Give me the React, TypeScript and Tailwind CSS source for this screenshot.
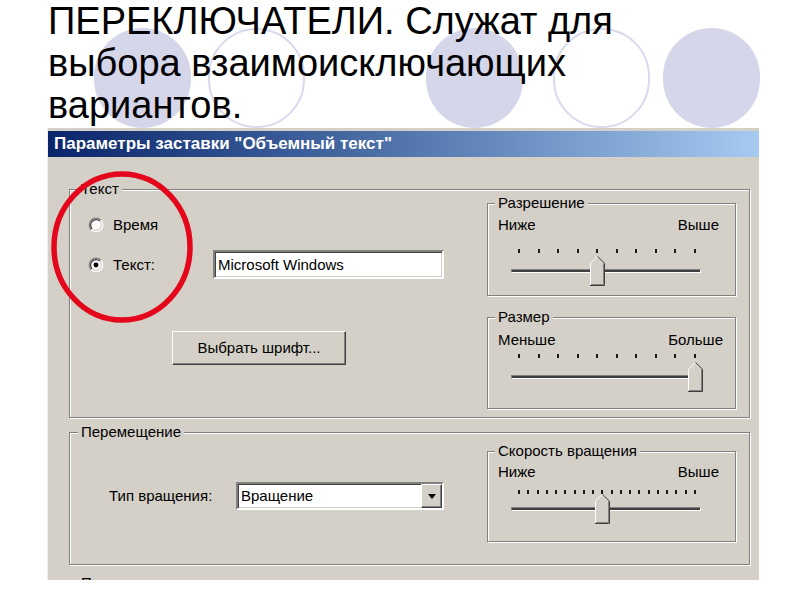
import type { ReactNode } from 'react';

const etched = 'border border-[#808080] shadow-[inset_1px_1px_0_#ffffff,1px_1px_0_#ffffff]';
const sunken =
  'border-2 border-t-[#808080] border-l-[#808080] border-b-white border-r-white shadow-[inset_1px_1px_0_#404040,inset_-1px_-1px_0_#d4d0c8]';
const raised =
  'border border-t-white border-l-white border-b-[#404040] border-r-[#404040] shadow-[inset_-1px_-1px_0_#808080]';

function Group({ label, left, className, children }: { label: string; left: string; className: string; children?: ReactNode }) {
  return (
    <div className={`relative ${etched} ${className}`}>
      <span className={`absolute -top-[10px] ${left} bg-[#d4d0c8] px-[3px] leading-[18px]`}>{label}</span>
      {children}
    </div>
  );
}

function Radio({ checked }: { checked?: boolean }) {
  return (
    <svg width="16" height="16" viewBox="0 0 13 13" className="shrink-0">
      <circle cx="6.5" cy="6.5" r="5" fill="#ffffff" />
      <path d="M2.61 10.39 A5.5 5.5 0 0 1 10.39 2.61" fill="none" stroke="#808080" />
      <path d="M10.39 2.61 A5.5 5.5 0 0 1 2.61 10.39" fill="none" stroke="#ffffff" />
      <path d="M3.32 9.68 A4.5 4.5 0 0 1 9.68 3.32" fill="none" stroke="#404040" />
      <path d="M9.68 3.32 A4.5 4.5 0 0 1 3.32 9.68" fill="none" stroke="#d4d0c8" />
      {checked && <circle cx="6.5" cy="6.5" r="2" fill="#000000" />}
    </svg>
  );
}

function Thumb({ left }: { left: number }) {
  return (
    <svg width="15" height="30" viewBox="0 0 15 30" className="absolute -top-[13px]" style={{ left }}>
      <path d="M0 7 L7 0 L8 0 L15 7 V30 H0 Z" fill="#d4d0c8" />
      <polyline points="0.5,29 0.5,7.2 7.3,0.5" fill="none" stroke="#ffffff" />
      <polyline points="13.5,7.5 13.5,28.5 1,28.5" fill="none" stroke="#808080" />
      <polyline points="7.6,0.5 14.5,7.2 14.5,29.5 0,29.5" fill="none" stroke="#404040" />
    </svg>
  );
}

interface SliderProps {
  title: string;
  low: string;
  high: string;
  ticks: number;
  value: number;
  box: string;
  pad: string;
  tickGap: string;
  trackGap: string;
}

function Slider({ title, low, high, ticks, value, box, pad, tickGap, trackGap }: SliderProps) {
  const step = 176 / (ticks - 1);
  return (
    <Group label={title} left="left-[7px]" className={`w-[249px] ${box}`}>
      <div className={`flex justify-between pl-[10px] leading-[18px] ${pad}`}>
        <span>{low}</span>
        <span>{high}</span>
      </div>
      <div className={`ml-[30px] w-[178px] h-[4px] flex justify-between ${tickGap}`}>
        {Array.from({ length: ticks }).map((_, i) => (
          <span key={i} className="w-[2px] h-[4px] bg-[#1a1a1a]" />
        ))}
      </div>
      <div className={`relative ml-[23px] w-[190px] ${trackGap}`}>
        <div className="h-[4px] border border-t-[#808080] border-l-[#808080] border-b-white border-r-white bg-[#404040]" />
        <Thumb left={8 + value * step - 7.5} />
      </div>
    </Group>
  );
}

const circles = [
  { x: 94, filled: true },
  { x: 208, filled: false },
  { x: 426, filled: true },
  { x: 553, filled: false },
  { x: 663, filled: true },
];

export default function App() {
  return (
    <div className="relative w-[800px] h-[600px] bg-white overflow-hidden font-['Liberation_Sans',Arial,sans-serif] text-black">
      {/* decorative circles of the slide */}
      {circles.map((c) => (
        <div
          key={c.x}
          className={`absolute top-[28px] w-[97px] h-[100px] rounded-full ${c.filled ? 'bg-[#d6d6eb]' : 'border-2 border-[#d9d9ed] bg-white'}`}
          style={{ left: c.x }}
        />
      ))}

      <div className="relative flex flex-col">
        <h1 className="h-[128px] pl-[48px] text-[38px] leading-[42px] font-normal">
          ПЕРЕКЛЮЧАТЕЛИ. Служат для
          <br />
          выбора взаимоисключающих
          <br />
          вариантов.
        </h1>

        <div className="ml-[47px] w-[712px] h-[452px] overflow-hidden bg-[#d4d0c8] border-l border-l-[#ececec] pt-[3px] text-[15px] leading-[18px]">
          <div className="h-[26px] flex items-center pl-[6px] bg-gradient-to-r from-[#0a246a] to-[#a6caf0] text-white font-bold text-[17px]">
            Параметры заставки "Объемный текст"
          </div>

          <div className="pl-[21px] pt-[32px] flex flex-col">
            <Group label="Текст" left="left-[8px]" className="w-[681px] h-[229px] flex">
              <div className="flex-1 flex flex-col items-start pl-[18px] pt-[25px]">
                <div className="h-[20px] flex items-center gap-[9px]">
                  <Radio />
                  <span>Время</span>
                </div>
                <div className="mt-[15px] h-[29px] flex items-center">
                  <Radio checked />
                  <span className="ml-[9px] w-[100px]">Текст:</span>
                  <div className={`w-[231px] h-[29px] bg-white flex items-center pl-[3px] ${sunken}`}>Microsoft Windows</div>
                </div>
                <button className={`mt-[52px] ml-[84px] w-[174px] h-[34px] bg-[#d4d0c8] flex items-center justify-center ${raised}`}>
                  Выбрать шрифт...
                </button>
              </div>
              <div className="flex flex-col pt-[13px] mr-[13px]">
                <Slider
                  title="Разрешение"
                  low="Ниже"
                  high="Выше"
                  ticks={10}
                  value={4}
                  box="h-[93px]"
                  pad="pt-[12px] pr-[16px]"
                  tickGap="mt-[15px]"
                  trackGap="mt-[16px]"
                />
                <Slider
                  title="Размер"
                  low="Меньше"
                  high="Больше"
                  ticks={10}
                  value={9}
                  box="mt-[21px] h-[92px]"
                  pad="pt-[13px] pr-[12px]"
                  tickGap="mt-[5px]"
                  trackGap="mt-[17px]"
                />
              </div>
            </Group>

            <Group label="Перемещение" left="left-[8px]" className="mt-[14px] w-[681px] h-[133px] flex">
              <div className="flex-1 flex items-start pl-[39px] pt-[49px]">
                <div className="h-[28px] flex items-center">
                  <span className="w-[127px]">Тип вращения:</span>
                  <div className={`w-[208px] h-[28px] bg-white flex items-center justify-between pl-[3px] ${sunken}`}>
                    <span>Вращение</span>
                    <span className={`w-[21px] h-[24px] bg-[#d4d0c8] flex items-center justify-center ${raised}`}>
                      <svg width="8" height="5" viewBox="0 0 8 5">
                        <polygon points="0,0 8,0 4,5" fill="#000000" />
                      </svg>
                    </span>
                  </div>
                </div>
              </div>
              <div className="pt-[18px] mr-[13px]">
                <Slider
                  title="Скорость вращения"
                  low="Ниже"
                  high="Выше"
                  ticks={20}
                  value={9}
                  box="h-[91px]"
                  pad="pt-[11px] pr-[16px]"
                  tickGap="mt-[9px]"
                  trackGap="mt-[13px]"
                />
              </div>
            </Group>

            <Group label="Поверхность" left="left-[8px]" className="mt-[18px] w-[681px] h-[120px]" />
          </div>
        </div>
      </div>

      {/* red annotation ellipse */}
      <svg width="146" height="156" viewBox="0 0 146 156" className="absolute left-[49px] top-[169px]">
        <ellipse cx="73" cy="78" rx="68" ry="73" fill="none" stroke="#e4061a" strokeWidth="5.5" />
      </svg>
    </div>
  );
}
